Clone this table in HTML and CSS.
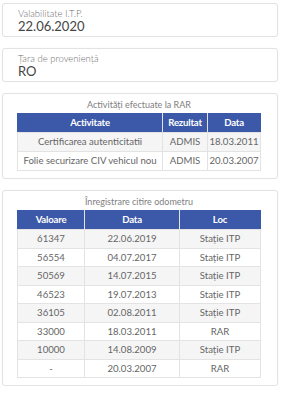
FILE: index.html
```html
<!DOCTYPE html>
<html lang="ro">
<head>
<meta charset="utf-8">
<link rel="stylesheet" href="styles.css">
</head>
<body>
<div class="page">
  <div class="card field">
    <div class="label">Valabilitate I.T.P.</div>
    <div class="value">22.06.2020</div>
  </div>
  <div class="card field">
    <div class="label">Țara de proveniență</div>
    <div class="value">RO</div>
  </div>
  <div class="card box">
    <div class="title">Activități efectuate la RAR</div>
    <table class="tbl tbl-rar">
      <thead>
        <tr><th class="c1">Activitate</th><th class="c2">Rezultat</th><th class="c3">Data</th></tr>
      </thead>
      <tbody>
        <tr><td>Certificarea autenticitatii</td><td>ADMIS</td><td>18.03.2011</td></tr>
        <tr><td>Folie securizare CIV vehicul nou</td><td>ADMIS</td><td>20.03.2007</td></tr>
      </tbody>
    </table>
  </div>
  <div class="card box">
    <div class="title">Înregistrare citire odometru</div>
    <table class="tbl tbl-odo">
      <thead>
        <tr><th class="c1">Valoare</th><th class="c2">Data</th><th class="c3">Loc</th></tr>
      </thead>
      <tbody>
        <tr><td>61347</td><td>22.06.2019</td><td>Stație ITP</td></tr>
        <tr><td>56554</td><td>04.07.2017</td><td>Stație ITP</td></tr>
        <tr><td>50569</td><td>14.07.2015</td><td>Stație ITP</td></tr>
        <tr><td>46523</td><td>19.07.2013</td><td>Stație ITP</td></tr>
        <tr><td>36105</td><td>02.08.2011</td><td>Stație ITP</td></tr>
        <tr><td>33000</td><td>18.03.2011</td><td>RAR</td></tr>
        <tr><td>10000</td><td>14.08.2009</td><td>Stație ITP</td></tr>
        <tr><td>-</td><td>20.03.2007</td><td>RAR</td></tr>
      </tbody>
    </table>
  </div>
</div>
</body>
</html>
```
FILE: styles.css
```css
html, body {
  margin: 0;
  padding: 0;
  background: #fff;
}
body {
  font-family: Lato, "Open Sans", sans-serif;
  font-weight: 300;
  color: #555;
}
.page {
  width: 276px;
  padding: 3px 0 0 2px;
  display: flex;
  flex-direction: column;
  gap: 11px;
}
.card {
  box-sizing: border-box;
  border: 1px solid #e3e3e3;
  border-radius: 3px;
  background: #fff;
  box-shadow: 0 0 2px rgba(0,0,0,0.04);
}
.field {
  height: 34px;
  padding: 4px 15px 0;
}
.label {
  font-size: 9.5px;
  line-height: 11px;
  color: #6f6f6f;
}
.value {
  font-size: 13px;
  font-weight: 400;
  line-height: 15px;
  color: #444;
}
.box {
  padding: 3px 16px 7px 14px;
}
.title {
  font-size: 9px;
  font-weight: 400;
  line-height: 15px;
  color: #808080;
  text-align: center;
  margin-bottom: 1px;
}
.tbl {
  width: 244px;
  border-collapse: collapse;
  table-layout: fixed;
  font-size: 9.6px;
  text-align: center;
}
.tbl th {
  background: #3c58a8;
  color: #fff;
  font-weight: 700;
  height: 19px;
  line-height: 19px;
  padding: 0;
  border: 1px solid #e3e3e3;
  border-top: none;
  letter-spacing: -0.2px;
}
.tbl th:first-child { border-left: 1px solid #3c58a8; }
.tbl th:last-child { border-right: 1px solid #3c58a8; }
.tbl td {
  height: 17.5px;
  line-height: 17.5px;
  padding: 0;
  border: 1px solid #e3e3e3;
  color: #666;
  font-weight: 400;
  white-space: nowrap;
}
.tbl tbody tr:nth-child(odd) td { background: #f5f5f5; }
.tbl-rar td { height: 18px; line-height: 18px; }
.tbl-rar .c1 { width: 144px; }
.tbl-rar .c2 { width: 44px; }
.tbl-odo .c1 { width: 66px; }
.tbl-odo .c2 { width: 94px; }
```
